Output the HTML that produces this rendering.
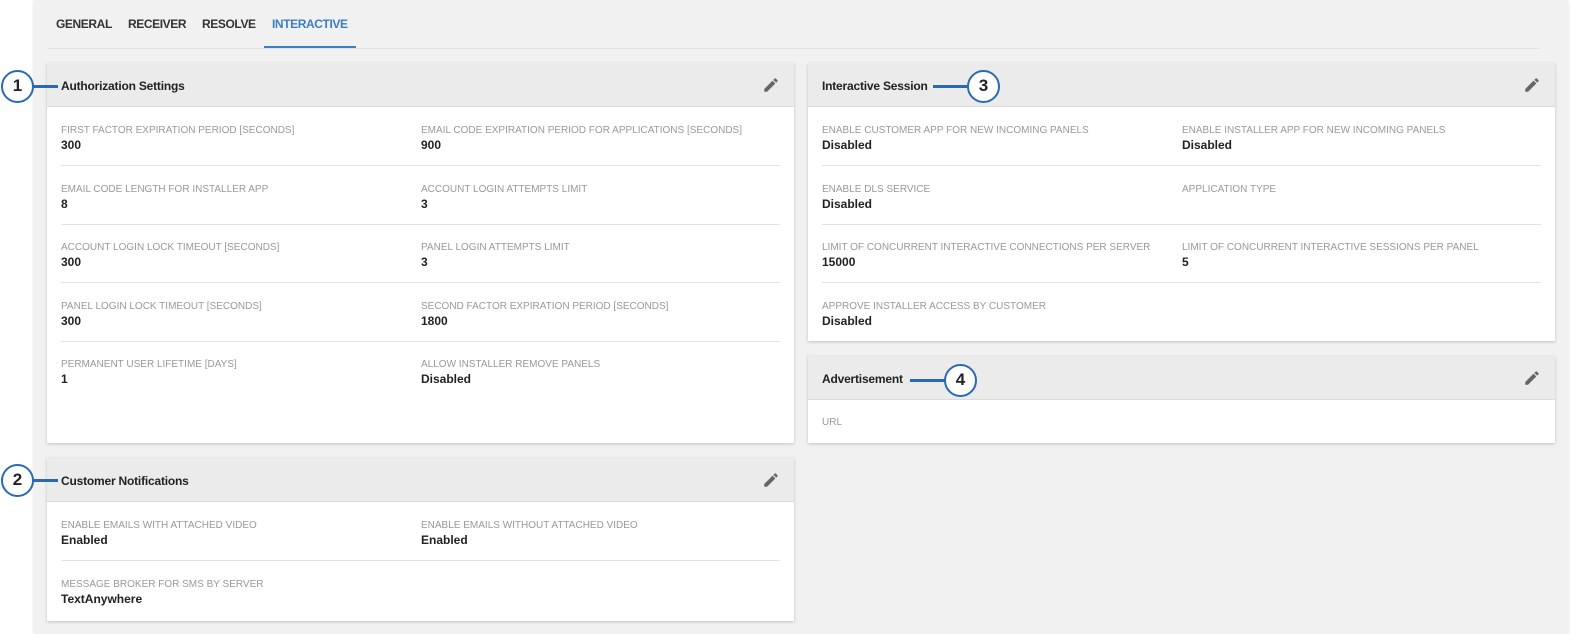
<!DOCTYPE html>
<html><head><style>
*{box-sizing:border-box;margin:0;padding:0}
body{width:1577px;height:634px;background:#fff;font-family:"Liberation Sans",Arial,sans-serif;position:relative;overflow:hidden}
#bg{position:absolute;left:34px;top:0;width:1534px;height:634px;background:#f1f1f1;box-shadow:0 1px 3px rgba(0,0,0,.15)}
.tab{position:absolute;top:17px;font-size:12px;font-weight:bold;color:#333;letter-spacing:-.4px}
.tab.act{color:#3b7fc4}
#ul{position:absolute;left:264px;top:46px;width:92px;height:2px;background:#3b7fc4}
#div{position:absolute;left:47px;top:48px;width:1493px;height:1px;background:#e2e2e2}
.card{position:absolute;background:#fff;box-shadow:0 1px 3px rgba(0,0,0,.2)}
.hd{height:44px;background:#ebebeb;border-bottom:1px solid #dcdcdc;font-size:12px;font-weight:bold;color:#222;padding:16px 14px;position:relative;letter-spacing:-.2px}
.pen{position:absolute;right:14px;top:13px}
.row{position:absolute;left:14px;right:14px;height:58px;border-bottom:1px solid #e3e3e3}
.row.nb{border-bottom:none}
.c{position:absolute;top:17px}
.l{font-size:10px;color:#999}
.v{font-size:12px;font-weight:bold;color:#222;margin-top:2px}
.circ{position:absolute;width:33px;height:33px;border:2.5px solid #2a6ab3;border-radius:50%;background:#fff;font-size:17px;font-weight:bold;color:#222;text-align:center;line-height:28px}
.ln{position:absolute;height:2.5px;background:#2a6ab3}
</style></head><body>
<div id="bg"></div>
<div class="tab" style="left:56px">GENERAL</div>
<div class="tab" style="left:128px">RECEIVER</div>
<div class="tab" style="left:202px">RESOLVE</div>
<div class="tab act" style="left:272px">INTERACTIVE</div>
<div id="ul"></div><div id="div"></div>

<svg width="0" height="0" style="position:absolute"><defs><symbol id="p" viewBox="0 0 24 24"><path fill="#666" d="M3 17.25V21h3.75L17.81 9.94l-3.75-3.75L3 17.25zM20.71 7.04a1 1 0 0 0 0-1.41l-2.34-2.34a1 1 0 0 0-1.41 0l-1.830 1.83 3.75 3.75 1.83-1.83z"/></symbol></defs></svg>

<div class="card" style="left:47px;top:63px;width:747px;height:380px">
<div class="hd">Authorization Settings<svg class="pen" width="18" height="18"><use href="#p"/></svg></div>
<div class="row" style="top:45px"><div class="c" style="left:0"><div class="l">FIRST FACTOR EXPIRATION PERIOD [SECONDS]</div><div class="v">300</div></div><div class="c" style="left:360px"><div class="l">EMAIL CODE EXPIRATION PERIOD FOR APPLICATIONS [SECONDS]</div><div class="v">900</div></div></div>
<div class="row" style="top:104px"><div class="c" style="left:0"><div class="l">EMAIL CODE LENGTH FOR INSTALLER APP</div><div class="v">8</div></div><div class="c" style="left:360px"><div class="l">ACCOUNT LOGIN ATTEMPTS LIMIT</div><div class="v">3</div></div></div>
<div class="row" style="top:162px"><div class="c" style="left:0"><div class="l">ACCOUNT LOGIN LOCK TIMEOUT [SECONDS]</div><div class="v">300</div></div><div class="c" style="left:360px"><div class="l">PANEL LOGIN ATTEMPTS LIMIT</div><div class="v">3</div></div></div>
<div class="row" style="top:221px"><div class="c" style="left:0"><div class="l">PANEL LOGIN LOCK TIMEOUT [SECONDS]</div><div class="v">300</div></div><div class="c" style="left:360px"><div class="l">SECOND FACTOR EXPIRATION PERIOD [SECONDS]</div><div class="v">1800</div></div></div>
<div class="row nb" style="top:279px"><div class="c" style="left:0"><div class="l">PERMANENT USER LIFETIME [DAYS]</div><div class="v">1</div></div><div class="c" style="left:360px"><div class="l">ALLOW INSTALLER REMOVE PANELS</div><div class="v">Disabled</div></div></div>
</div>

<div class="card" style="left:47px;top:458px;width:747px;height:163px">
<div class="hd">Customer Notifications<svg class="pen" width="18" height="18"><use href="#p"/></svg></div>
<div class="row" style="top:45px"><div class="c" style="left:0"><div class="l">ENABLE EMAILS WITH ATTACHED VIDEO</div><div class="v">Enabled</div></div><div class="c" style="left:360px"><div class="l">ENABLE EMAILS WITHOUT ATTACHED VIDEO</div><div class="v">Enabled</div></div></div>
<div class="row nb" style="top:104px"><div class="c" style="left:0"><div class="l">MESSAGE BROKER FOR SMS BY SERVER</div><div class="v">TextAnywhere</div></div></div>
</div>

<div class="card" style="left:808px;top:63px;width:747px;height:278px">
<div class="hd">Interactive Session<svg class="pen" width="18" height="18"><use href="#p"/></svg></div>
<div class="row" style="top:45px"><div class="c" style="left:0"><div class="l">ENABLE CUSTOMER APP FOR NEW INCOMING PANELS</div><div class="v">Disabled</div></div><div class="c" style="left:360px"><div class="l">ENABLE INSTALLER APP FOR NEW INCOMING PANELS</div><div class="v">Disabled</div></div></div>
<div class="row" style="top:104px"><div class="c" style="left:0"><div class="l">ENABLE DLS SERVICE</div><div class="v">Disabled</div></div><div class="c" style="left:360px"><div class="l">APPLICATION TYPE</div></div></div>
<div class="row" style="top:162px"><div class="c" style="left:0"><div class="l">LIMIT OF CONCURRENT INTERACTIVE CONNECTIONS PER SERVER</div><div class="v">15000</div></div><div class="c" style="left:360px"><div class="l">LIMIT OF CONCURRENT INTERACTIVE SESSIONS PER PANEL</div><div class="v">5</div></div></div>
<div class="row nb" style="top:221px"><div class="c" style="left:0"><div class="l">APPROVE INSTALLER ACCESS BY CUSTOMER</div><div class="v">Disabled</div></div></div>
</div>

<div class="card" style="left:808px;top:356px;width:747px;height:87px">
<div class="hd">Advertisement<svg class="pen" width="18" height="18"><use href="#p"/></svg></div>
<div class="row nb" style="top:45px"><div class="c" style="left:0;top:16px"><div class="l">URL</div></div></div>
</div>

<div class="ln" style="left:32px;top:85px;width:26px"></div><div class="circ" style="left:1px;top:70px">1</div>
<div class="ln" style="left:32px;top:479px;width:26px"></div><div class="circ" style="left:1px;top:464px">2</div>
<div class="ln" style="left:933px;top:85px;width:36px"></div><div class="circ" style="left:967px;top:70px">3</div>
<div class="ln" style="left:910px;top:379px;width:36px"></div><div class="circ" style="left:944px;top:364px">4</div>
</body></html>
